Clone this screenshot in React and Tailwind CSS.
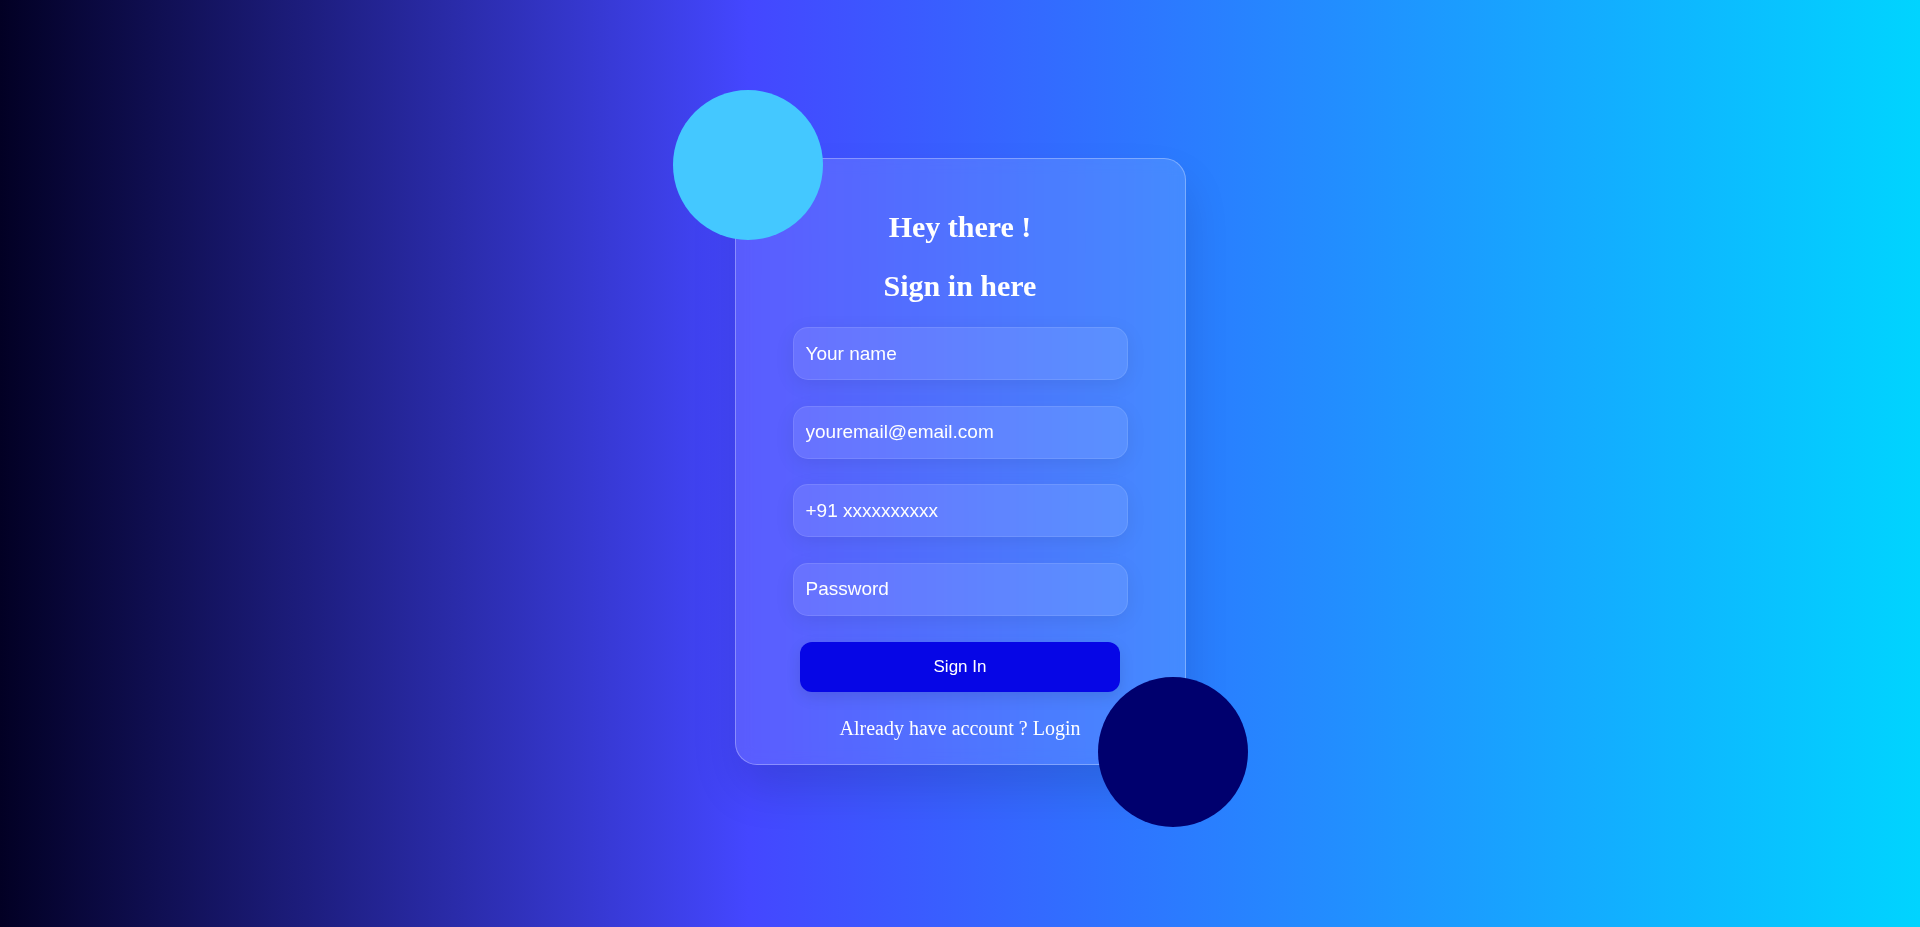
export default function App() {
  return (
    <div className="relative flex min-h-[927px] w-full justify-center overflow-hidden bg-[linear-gradient(90deg,#020024_0%,#4447ff_39%,#00d4ff_100%)]">
      <div className="relative mt-[158px] h-[607px] w-[451px]">
        <div className="absolute left-[-62px] top-[-68px] z-10 h-[150px] w-[150px] rounded-full bg-[#44c8ff]" />
        <div className="flex h-full w-full flex-col items-center rounded-[22px] border border-white/30 bg-white/[0.12] pt-[49px] shadow-[0_25px_45px_rgba(0,0,0,0.12)] backdrop-blur-sm">
          <h1 className="font-['Liberation_Serif',serif] text-[30px] font-bold leading-[37px] text-white">
            Hey there !
          </h1>
          <h2 className="mt-[22px] font-['Liberation_Serif',serif] text-[30px] font-bold leading-[37px] text-white">
            Sign in here
          </h2>
          <div className="mt-[23px] flex flex-col gap-[25.5px]">
            {["Your name", "youremail@email.com", "+91 xxxxxxxxxx", "Password"].map((p) => (
              <input
                key={p}
                type="text"
                placeholder={p}
                className="h-[53px] w-[335px] rounded-[15px] border border-white/10 bg-white/10 px-[12px] font-['Liberation_Sans',Arial,sans-serif] text-[19px] text-white shadow-[0_5px_20px_rgba(0,0,0,0.08)] outline-none placeholder:text-white"
              />
            ))}
          </div>
          <button className="mt-[26px] h-[50px] w-[320px] rounded-[12px] bg-[#0606e6] font-['Liberation_Sans',Arial,sans-serif] text-[17px] text-white shadow-[0_5px_15px_rgba(0,0,0,0.1)]">
            Sign In
          </button>
          <p className="mt-[25px] font-['Liberation_Serif',serif] text-[20px] leading-[23px] text-white">
            Already have account ? Login
          </p>
        </div>
        <div className="absolute left-[363px] top-[519px] z-10 h-[150px] w-[150px] rounded-full bg-[#00006e]" />
      </div>
    </div>
  );
}
